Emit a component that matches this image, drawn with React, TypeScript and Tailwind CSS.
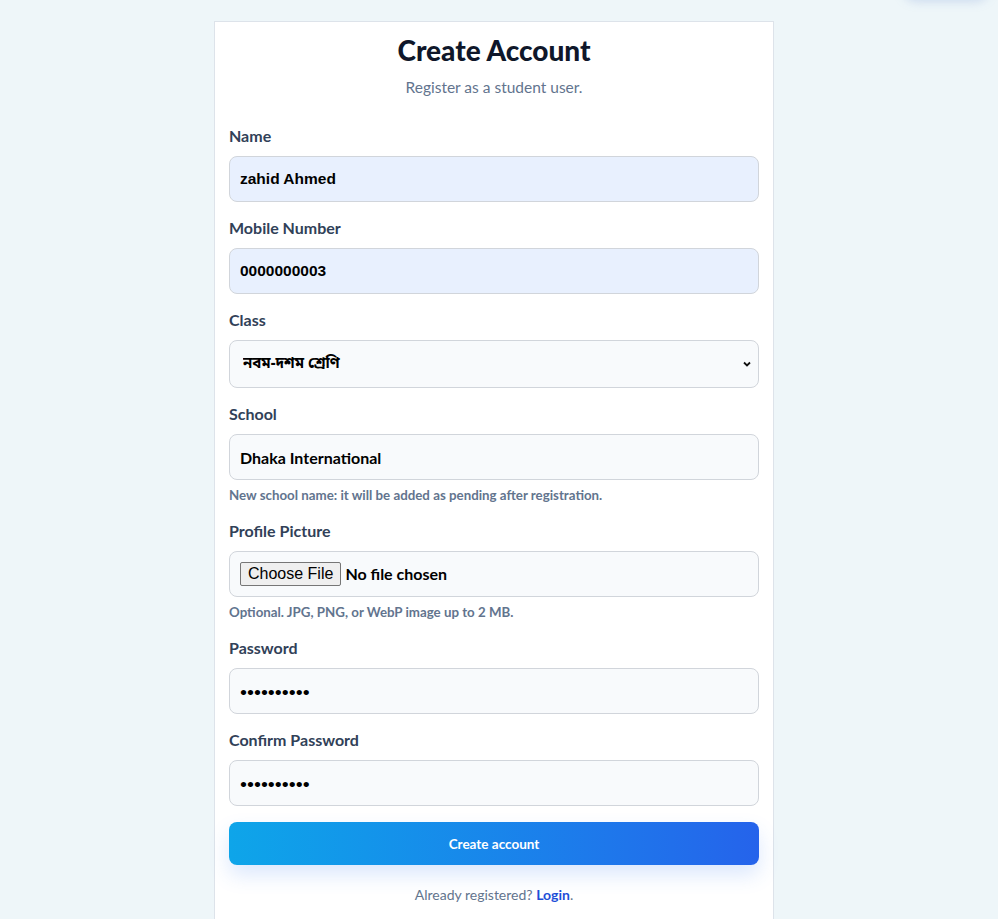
import React from 'react';

interface FieldProps {
  label: string;
  help?: string;
  children: React.ReactNode;
}

const Field: React.FC<FieldProps> = ({ label, help, children }) => (
  <div className="mb-4">
    <label className="block text-[16px] font-bold leading-5 text-slate-700 mb-[10px]">{label}</label>
    {children}
    {help && <p className="mt-[6px] text-[13.3px] font-bold leading-[19px] text-slate-500">{help}</p>}
  </div>
);

// no font size here, every field sets its own
const inputBase = 'w-full h-[46px] rounded-lg border border-[#d1d5db] px-[10px] font-bold text-black outline-none';

const App: React.FC = () => {
  return (
    <div className="min-h-screen bg-[#eef6f9] font-['Lato','Noto_Sans',sans-serif] relative overflow-hidden">
      {/* faint shadow of an element above the viewport */}
      <div className="absolute -top-[30px] right-[8px] w-[88px] h-[30px] rounded-full bg-[#e3ecf7] shadow-[0_2px_10px_rgba(147,172,220,0.35)]" />

      <div className="pt-[21px] pr-[10px] flex justify-center">
        <div className="w-[560px] bg-white border border-[#dde3ea] px-[14px] pt-[10px] pb-10">
          <h1 className="text-center text-[28px] font-black leading-9 text-[#0f172a]">Create Account</h1>
          <p className="text-center text-[15.5px] text-slate-500 mt-[8px] mb-[27px]">Register as a student user.</p>

          <form onSubmit={(e) => e.preventDefault()}>
            <Field label="Name">
              <input
                className={`${inputBase} bg-[#e8f0fe] font-['Liberation_Sans',sans-serif] text-[15.5px]`}
                defaultValue="zahid Ahmed"
              />
            </Field>

            <Field label="Mobile Number">
              <input
                className={`${inputBase} bg-[#e8f0fe] font-['Liberation_Sans',sans-serif] text-[15.5px]`}
                defaultValue="0000000003"
              />
            </Field>

            <Field label="Class">
              <div className="relative">
                <select
                  className={`${inputBase} h-[48px] appearance-none bg-[#f8fafc] pl-[13px] text-[15px] font-['Noto_Sans_Bengali','Noto_Sans',sans-serif]`}
                  defaultValue="9-10"
                >
                  <option value="9-10">নবম-দশম শ্রেণি</option>
                </select>
                <svg
                  className="pointer-events-none absolute right-[7px] top-1/2 -translate-y-1/2"
                  width="10"
                  height="10"
                  viewBox="0 0 10 10"
                  fill="none"
                  stroke="#111"
                  strokeWidth="1.8"
                >
                  <path d="M2 3.5 L5 6.5 L8 3.5" />
                </svg>
              </div>
            </Field>

            <Field label="School" help="New school name: it will be added as pending after registration.">
              <input className={`${inputBase} bg-[#f8fafc] text-[16px]`} defaultValue="Dhaka International" />
            </Field>

            <Field label="Profile Picture" help="Optional. JPG, PNG, or WebP image up to 2 MB.">
              <div className={`${inputBase} bg-[#f8fafc] flex items-center text-[16px]`}>
                <span className="h-6 px-[7px] flex items-center border border-[#767676] rounded-[2px] bg-[#efefef] font-normal text-black font-['Liberation_Sans',sans-serif]">
                  Choose File
                </span>
                <span className="ml-1">No file chosen</span>
              </div>
            </Field>

            <Field label="Password">
              <input type="password" className={`${inputBase} bg-[#f8fafc] text-[12px]`} defaultValue="1234567890" />
            </Field>

            <Field label="Confirm Password">
              <input type="password" className={`${inputBase} bg-[#f8fafc] text-[12px]`} defaultValue="1234567890" />
            </Field>

            <button
              type="submit"
              className="w-full h-[43px] rounded-lg bg-gradient-to-r from-[#0ea5e9] to-[#2563eb] text-white text-[13.5px] font-bold shadow-[0_10px_20px_rgba(59,130,246,0.18)]"
            >
              Create account
            </button>
          </form>

          <p className="mt-5 text-center text-[14px] leading-5 text-slate-500">
            Already registered?{' '}
            <a href="#" className="font-bold text-[#1d4ed8]">
              Login
            </a>
            .
          </p>
        </div>
      </div>
    </div>
  );
};

export default App;
